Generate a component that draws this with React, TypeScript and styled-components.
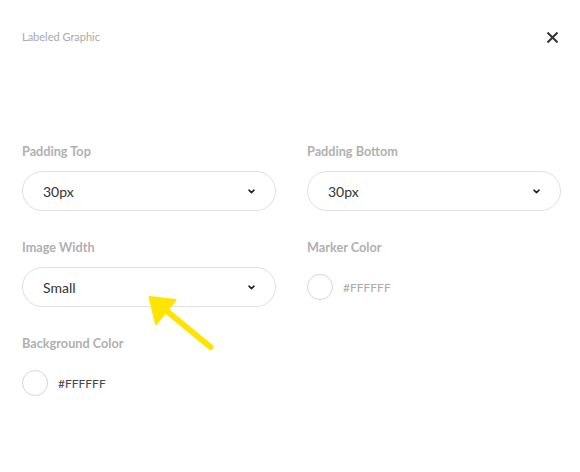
import React from 'react';
import styled, { createGlobalStyle } from 'styled-components';

const GlobalStyle = createGlobalStyle`
  html, body {
    margin: 0;
    padding: 0;
    background: #ffffff;
  }
  body {
    font-family: Lato, "Open Sans", "Liberation Sans", sans-serif;
  }
`;

const Panel = styled.div`
  position: relative;
  width: 580px;
  height: 472px;
  box-sizing: border-box;
  padding: 30px 19px 0 22px;
  background: #fff;
`;

const Header = styled.div`
  display: flex;
  justify-content: space-between;
  align-items: center;
  height: 14px;
  margin-bottom: 100px;
`;

const Title = styled.span`
  font-size: 11px;
  color: #a9a9a9;
  line-height: 14px;
`;

const CloseButton = styled.button`
  border: 0;
  background: none;
  padding: 0;
  margin-right: 3px;
  width: 12px;
  height: 14px;
  display: flex;
  align-items: center;
  justify-content: center;
  cursor: pointer;
`;

const Grid = styled.div`
  display: grid;
  grid-template-columns: 254px 254px;
  column-gap: 31px;
  row-gap: 29px;
`;

const Field = styled.div`
  display: flex;
  flex-direction: column;
`;

const Label = styled.label`
  font-size: 12.7px;
  font-weight: 700;
  color: #b0b0b0;
  line-height: 14px;
  margin-bottom: 13px;
`;

const Select = styled.div`
  height: 40px;
  box-sizing: border-box;
  border: 1px solid #e0e0e0;
  border-radius: 20px;
  display: flex;
  align-items: center;
  justify-content: space-between;
  padding: 0 20px 0 20px;
  font-size: 14px;
  color: #333;
`;

const ColorRow = styled.div`
  height: 40px;
  display: flex;
  align-items: center;
  gap: 10px;
`;

const Swatch = styled.span<{ $color: string }>`
  width: 24px;
  height: 24px;
  border-radius: 50%;
  border: 1px solid #d6d6d6;
  background: ${(p) => p.$color};
`;

const HexText = styled.span<{ $muted?: boolean }>`
  font-size: 12px;
  color: ${(p) => (p.$muted ? '#ababab' : '#444')};
`;

const Annotation = styled.svg`
  position: absolute;
  left: 0;
  top: 0;
  pointer-events: none;
`;

function Chevron() {
  return (
    <svg width="7" height="5" viewBox="0 0 7 5">
      <path d="M1 1.2 L3.5 3.6 L6 1.2" fill="none" stroke="#222" strokeWidth="1.6" strokeLinecap="round" strokeLinejoin="round" />
    </svg>
  );
}

function SelectField({ label, value }: { label: string; value: string }) {
  return (
    <Field>
      <Label>{label}</Label>
      <Select>
        <span>{value}</span>
        <Chevron />
      </Select>
    </Field>
  );
}

function ColorField({ label, value, muted }: { label: string; value: string; muted?: boolean }) {
  return (
    <Field>
      <Label>{label}</Label>
      <ColorRow>
        <Swatch $color={value} />
        <HexText $muted={muted}>{value}</HexText>
      </ColorRow>
    </Field>
  );
}

export default function App() {
  return (
    <>
      <GlobalStyle />
      <Panel>
        <Header>
          <Title>Labeled Graphic</Title>
          <CloseButton aria-label="Close">
            <svg width="11" height="11" viewBox="0 0 11 11">
              <path d="M1.2 1.2 L9.8 9.8 M9.8 1.2 L1.2 9.8" stroke="#333" strokeWidth="2" strokeLinecap="square" />
            </svg>
          </CloseButton>
        </Header>
        <Grid>
          <SelectField label="Padding Top" value="30px" />
          <SelectField label="Padding Bottom" value="30px" />
          <SelectField label="Image Width" value="Small" />
          <ColorField label="Marker Color" value="#FFFFFF" muted />
          <ColorField label="Background Color" value="#FFFFFF" />
        </Grid>
        <Annotation width="580" height="472" viewBox="0 0 580 472">
          <line x1="210.5" y1="347" x2="163" y2="308" stroke="#FFE400" strokeWidth="6" strokeLinecap="round" />
          <polygon points="149.5,297 175.5,300 156,324" fill="#FFE400" stroke="#FFE400" strokeWidth="2" strokeLinejoin="round" />
        </Annotation>
      </Panel>
    </>
  );
}
